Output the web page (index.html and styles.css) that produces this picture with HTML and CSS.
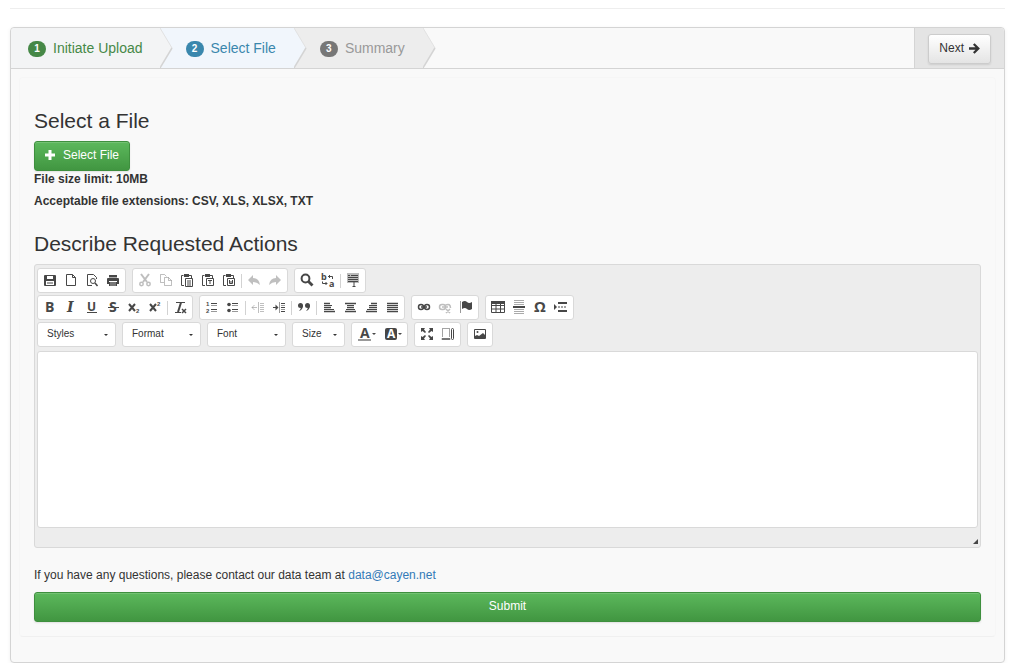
FILE: index.html
```html
<!DOCTYPE html>
<html lang="en">
<head>
<meta charset="utf-8">
<title>Upload</title>
<link rel="stylesheet" href="styles.css">
</head>
<body>
<hr class="rule">
<main class="wizard">
  <header class="wizard-head">
    <ol class="steps">
      <li class="step done"><span class="badge">1</span>Initiate Upload
        <svg class="chevron" viewBox="0 0 13 40"><path class="fill" d="M0 0L12 20 0 40z"/><path class="edge-top" d="M0 0L12 20"/><path class="edge" d="M12 20L0 40"/></svg></li>
      <li class="step active"><span class="badge">2</span>Select File
        <svg class="chevron" viewBox="0 0 13 40"><path class="fill" d="M0 0L12 20 0 40z"/><path class="edge-top" d="M0 0L12 20"/><path class="edge" d="M12 20L0 40"/></svg></li>
      <li class="step"><span class="badge">3</span>Summary
        <svg class="chevron" viewBox="0 0 13 40"><path class="fill" d="M0 0L12 20 0 40z"/><path class="edge-top" d="M0 0L12 20"/><path class="edge" d="M12 20L0 40"/></svg></li>
    </ol>
    <div class="actions">
      <button class="btn btn-default" type="button">Next
        <svg class="mark" viewBox="0 0 11 11"><path d="M0 5.5H9M4.8 1L9.3 5.5 4.8 10" fill="none" stroke="currentColor" stroke-width="2.3"/></svg></button>
    </div>
  </header>
  <form class="panel">
    <h2 class="title">Select a File</h2>
    <button class="btn btn-success" type="button"><svg class="mark plus" viewBox="0 0 11 11"><path d="M5 0v10M0 5h10" stroke="currentColor" stroke-width="3"/></svg>Select File</button>
    <p class="note strong">File size limit: 10MB</p>
    <p class="note strong spaced">Acceptable file extensions: CSV, XLS, XLSX, TXT</p>
    <h2 class="title second">Describe Requested Actions</h2>

    <div class="editor">
      <div class="toolbar">
        <div class="row">
          <div class="group">
            <button type="button" class="tool" aria-label="Save"><svg viewBox="0 0 14 14"><path d="M1 3q0-1 1-1h10q1 0 1 1v9q0 1-1 1H2q-1 0-1-1z" fill="#474747"/><path d="M4 3h6v3H4zM3 8h8v4H3z" fill="#fff"/><path d="M4 10h6" stroke="#474747"/></svg></button>
            <button type="button" class="tool" aria-label="New page"><svg viewBox="0 0 14 14"><path d="M2.500 1.500h6l3 3v8h-9zM8.500 1.500v3h3" class="ln"/></svg></button>
            <button type="button" class="tool" aria-label="Preview"><svg viewBox="0 0 14 14"><path d="M11.500 6V4.500l-3-3h-6v11H7" class="ln"/><circle cx="8" cy="8" r="2.500" class="ln"/><path d="M10 10l2.500 3" class="ln bold"/></svg></button>
            <button type="button" class="tool" aria-label="Print"><svg viewBox="0 0 14 14"><path d="M3 2h8v2H3zM1 6q0-1 1-1h10q1 0 1 1v5h-2V8H3v3H1zM3 9h8v4H3z" fill="#474747"/><path d="M4 10h6M4 12h6M3 4.500h8" stroke="#aaa"/></svg></button>
          </div>
          <div class="group">
            <button type="button" class="tool off" aria-label="Cut" disabled><svg viewBox="0 0 14 14"><path d="M3 1l6 8M11 1L5 9" class="ln wide"/><circle cx="3.500" cy="11" r="1.700" class="ln bold"/><circle cx="10.500" cy="11" r="1.700" class="ln bold"/></svg></button>
            <button type="button" class="tool off" aria-label="Copy" disabled><svg viewBox="0 0 14 14"><path d="M5 9.500H1.500v-8h4l2 2M5.500 4.500h4l3 3v5h-7zM9.500 4.500v3h3" class="ln"/></svg></button>
            <button type="button" class="tool" aria-label="Paste"><svg viewBox="0 0 14 14"><path d="M4 12.500H1.500v-10h2M9 2.500h2.500V5" class="ln"/><path d="M4 1h5v3H4z" fill="#474747"/><path d="M5.500 5.500h7v8h-7zM7 8h4M7 10h4M7 12h4" class="ln"/></svg></button>
            <button type="button" class="tool" aria-label="Paste as text"><svg viewBox="0 0 14 14"><path d="M4 12.500H1.500v-10h2M9 2.500h2.500V5" class="ln"/><path d="M4 1h5v3H4z" fill="#474747"/><path d="M5.500 5.500h7v7h-7zM7 7.500h4M9 7.500V11" class="ln"/></svg></button>
            <button type="button" class="tool" aria-label="Paste from Word"><svg viewBox="0 0 14 14"><path d="M4 12.500H1.500v-10h2M9 2.500h2.500V5" class="ln"/><path d="M4 1h5v3H4z" fill="#474747"/><path d="M5.500 5.500h7v7h-7zM7.500 7v3.500h3V7M9 8v3" class="ln"/></svg></button>
            <span class="sep"></span>
            <button type="button" class="tool off" aria-label="Undo" disabled><svg viewBox="0 0 14 14"><path d="M1 7l5-5v3q6 0 7 7Q10 9 6 9v3z" fill="#474747"/></svg></button>
            <button type="button" class="tool off" aria-label="Redo" disabled><svg viewBox="0 0 14 14"><path d="M13 7L8 2v3Q2 5 1 12 4 9 8 9v3z" fill="#474747"/></svg></button>
          </div>
          <div class="group">
            <button type="button" class="tool" aria-label="Find"><svg viewBox="0 0 14 14"><circle cx="5.500" cy="5.500" r="3.900" class="ln wide"/><path d="M8.500 8.500l4 4" stroke="#474747" stroke-width="2.800"/></svg></button>
            <button type="button" class="tool" aria-label="Replace"><svg viewBox="0 0 14 14"><text x="0" y="7" class="glyph mini">b</text><text x="8" y="14" class="glyph mini">a</text><path d="M7 3.500h4.500V6M9 2L7.500 3.500 9 5M1.500 8.500v2H6M4.500 9L6 10.500 4.500 12" class="ln"/></svg></button>
            <span class="sep"></span>
            <button type="button" class="tool" aria-label="Select all"><svg viewBox="0 0 14 14"><path d="M1 0h12v10H1z" fill="#bbb"/><path d="M2 2.500h2M5 2.500h7M2 4.500h10M2 6.500h10M2 8.500h10M8 9v4M6.500 13.500h3" class="ln"/></svg></button>
          </div>
        </div>
        <div class="row">
          <div class="group">
            <button type="button" class="tool" aria-label="Bold"><svg viewBox="0 0 14 14"><text x="2" y="12" class="glyph">B</text></svg></button>
            <button type="button" class="tool" aria-label="Italic"><svg viewBox="0 0 14 14"><text x="3" y="12" class="glyph serif">I</text></svg></button>
            <button type="button" class="tool" aria-label="Underline"><svg viewBox="0 0 14 14"><text x="2" y="11" class="glyph small">U</text><path d="M2 12.500h10" class="ln"/></svg></button>
            <button type="button" class="tool" aria-label="Strikethrough"><svg viewBox="0 0 14 14"><text x="3" y="12" class="glyph">S</text><path d="M2 7.500h11" class="ln"/></svg></button>
            <button type="button" class="tool" aria-label="Subscript"><svg viewBox="0 0 14 14"><path d="M2 4l6 7M8 4l-6 7" class="ln wide"/><text x="9" y="13" class="glyph tiny">2</text></svg></button>
            <button type="button" class="tool" aria-label="Superscript"><svg viewBox="0 0 14 14"><path d="M2 4l6 7M8 4l-6 7" class="ln wide"/><text x="9" y="6" class="glyph tiny">2</text></svg></button>
            <span class="sep"></span>
            <button type="button" class="tool" aria-label="Remove format"><svg viewBox="0 0 14 14"><path d="M3 2.500h9M2 12.500h6" class="ln"/><path d="M8 2.500L5 12" class="ln wide"/><path d="M9 9l4 4M13 9l-4 4" class="ln bold"/></svg></button>
          </div>
          <div class="group">
            <button type="button" class="tool" aria-label="Numbered list"><svg viewBox="0 0 14 14"><text x="1" y="6" class="glyph tiny">1</text><text x="1" y="13" class="glyph tiny">2</text><path d="M6 3.500h6M6 9.500h6" class="ln"/><path d="M6 5.500h6M6 11.500h6" stroke="#999"/></svg></button>
            <button type="button" class="tool" aria-label="Bulleted list"><svg viewBox="0 0 14 14"><circle cx="3" cy="4.500" r="1.800" fill="#474747"/><circle cx="3" cy="10.500" r="1.800" fill="#474747"/><path d="M6 3.500h6M6 9.500h6" class="ln"/><path d="M6 5.500h6M6 11.500h6" stroke="#999"/></svg></button>
            <span class="sep"></span>
            <button type="button" class="tool off" aria-label="Outdent" disabled><svg viewBox="0 0 14 14"><path d="M1 7.500h5M3.500 5L1 7.500 3.500 10M7.500 2v11M9 3.500h4M9 5.500h4M9 7.500h4M9 9.500h4M9 11.500h4" class="ln"/></svg></button>
            <button type="button" class="tool" aria-label="Indent"><svg viewBox="0 0 14 14"><path d="M1 7.500h5M9 3.500h4M9 7.500h4M9 11.500h4" class="ln"/><path d="M3.500 4.500l3 3-3 3z" fill="#474747"/><path d="M7.500 2v11M9 5.500h4M9 9.500h4" stroke="#999"/></svg></button>
            <span class="sep"></span>
            <button type="button" class="tool" aria-label="Quote"><svg viewBox="0 0 14 14"><g fill="#474747"><circle cx="3.500" cy="5.500" r="2.500"/><path d="M6 5q0 5-4 6 2-2 2-4z"/><circle cx="10.500" cy="5.500" r="2.500"/><path d="M13 5q0 5-4 6 2-2 2-4z"/></g></svg></button>
            <span class="sep"></span>
            <button type="button" class="tool" aria-label="Align left"><svg viewBox="0 0 14 14"><path d="M2 3.500h6M2 7.500h7M2 11.500h11" class="ln bold"/><path d="M2 5.500h8M2 9.500h10" class="ln"/></svg></button>
            <button type="button" class="tool" aria-label="Center"><svg viewBox="0 0 14 14"><path d="M2 3.500h11M4 7.500h7M2 11.500h11" class="ln bold"/><path d="M4 5.500h7M3 9.500h9" class="ln"/></svg></button>
            <button type="button" class="tool" aria-label="Align right"><svg viewBox="0 0 14 14"><path d="M7 3.500h6M5 7.500h8M2 11.500h11" class="ln bold"/><path d="M5 5.500h8M3 9.500h10" class="ln"/></svg></button>
            <button type="button" class="tool" aria-label="Justify"><svg viewBox="0 0 14 14"><path d="M2 3.500h11M2 7.500h11M2 11.500h11" class="ln bold"/><path d="M2 5.500h11M2 9.500h11" class="ln"/></svg></button>
          </div>
          <div class="group">
            <button type="button" class="tool" aria-label="Link"><svg viewBox="0 0 14 14"><rect x="1.500" y="4.500" width="5" height="5" rx="2.500" class="ln bold"/><rect x="7.500" y="4.500" width="5" height="5" rx="2.500" class="ln bold"/><path d="M4 7h6" class="ln bold"/></svg></button>
            <button type="button" class="tool off" aria-label="Unlink" disabled><svg viewBox="0 0 14 14"><rect x="1.500" y="4.500" width="6" height="5" rx="2.500" class="ln bold"/><path d="M4 7h6M7.500 5q5-2 5 3M8 9l4 4M12 9l-4 4" class="ln bold"/></svg></button>
            <button type="button" class="tool" aria-label="Anchor"><svg viewBox="0 0 14 14"><path d="M1.500 1v12" stroke="#999"/><path d="M3 2q3-2 5 0t5 0v7q-3 2-5 0t-5 0z" fill="#474747"/></svg></button>
          </div>
          <div class="group">
            <button type="button" class="tool" aria-label="Table"><svg viewBox="0 0 14 14"><path d="M.500 2.500h13v10H.500zM.500 5.500h13M.500 9h13M5 3v9.500M9.500 3v9.500" class="ln"/><path d="M0 1h14v3H0z" fill="#474747"/></svg></button>
            <button type="button" class="tool" aria-label="Horizontal line"><svg viewBox="0 0 14 14"><path d="M2 .500h10M2 2.500h10M2 4.500h10M2 9.500h10M2 11.500h10M2 13.500h10" stroke="#aaa"/><path d="M1 7h12" class="ln wide"/></svg></button>
            <button type="button" class="tool" aria-label="Special character"><svg viewBox="0 0 14 14"><text x="1" y="12" class="glyph omega">Ω</text></svg></button>
            <button type="button" class="tool" aria-label="Page break"><svg viewBox="0 0 14 14"><path d="M0 4l3 3-3 3z" fill="#474747"/><path d="M4 3h9M4 11h9" class="ln wide"/><path d="M4 7h9" class="ln" stroke-dasharray="2 1"/></svg></button>
          </div>
        </div>
        <div class="row">
          <label class="combo"><select aria-label="Styles"><option>Styles</option></select></label>
          <label class="combo"><select aria-label="Format"><option>Format</option></select></label>
          <label class="combo"><select aria-label="Font"><option>Font</option></select></label>
          <label class="combo narrow"><select aria-label="Size"><option>Size</option></select></label>
          <div class="group colors">
            <button type="button" class="tool" aria-label="Text color"><svg viewBox="0 0 14 14"><text x="2" y="11" class="glyph">A</text><path d="M0 13h13" stroke="#999" stroke-width="2"/></svg><span class="caret"></span></button>
            <button type="button" class="tool" aria-label="Background color"><svg viewBox="0 0 14 14"><rect x="1" y="1" width="12" height="12" rx="2" fill="#474747"/><text x="3" y="11" class="glyph small invert">A</text></svg><span class="caret"></span></button>
          </div>
          <div class="group">
            <button type="button" class="tool" aria-label="Maximize"><svg viewBox="0 0 14 14"><path d="M1 1h4L4 2.500 6 5 5 6 2.500 4 1 5zM13 1v4l-1.500-1L9 6 8 5l2-2.500L9 1zM1 13V9l1.500 1L5 8l1 1-2 2.500L5 13zM13 13H9l1-1.500L8 9l1-1 2.500 2L13 9z" fill="#474747"/></svg></button>
            <button type="button" class="tool" aria-label="Show blocks"><svg viewBox="0 0 14 14"><path d="M1.500 9.500v-8h7v8" class="ln" stroke-dasharray="1 1"/><path d="M1 11.500h8v1H1z" stroke="#777" fill="none"/><rect x="10.500" y="1.500" width="2" height="11" rx="1" class="ln"/></svg></button>
          </div>
          <div class="group">
            <button type="button" class="tool" aria-label="Image"><svg viewBox="0 0 14 14"><path d="M1.500 2.500h11v9h-11z" class="ln"/><circle cx="4.500" cy="5" r="1" fill="#474747"/><path d="M2 11V9l2-1 2 1 4-3 2 2v3z" fill="#474747"/></svg></button>
          </div>
        </div>
      </div>
      <textarea class="content" aria-label="Requested actions"></textarea>
      <div class="status"><svg class="grip" viewBox="0 0 5 5"><path d="M5 0v5H0z"/></svg></div>
    </div>

    <p class="note contact">If you have any questions, please contact our data team at <a href="mailto:data@cayen.net">data@cayen.net</a></p>
    <button class="btn btn-success submit" type="submit">Submit</button>
  </form>
</main>
</body>
</html>
```
FILE: styles.css
```css
* { box-sizing: border-box; }

body {
  margin: 0;
  padding: 8px 6px 0 10px;
  background: #fff;
  color: #333;
  font: 12px/16px "Liberation Sans", Arial, sans-serif;
}

button, select, textarea { font-family: inherit; }

.rule {
  height: 1px;
  margin: 0 0 18px;
  border: 0;
  background: #eee;
}

.wizard {
  border: 1px solid #d4d4d4;
  border-radius: 4px;
  background: #f9f9f9;
  box-shadow: 0 1px 4px rgba(0, 0, 0, .06);
  padding-bottom: 25px;
}

.wizard-head {
  display: flex;
  justify-content: space-between;
  height: 41px;
  border-bottom: 1px solid #d4d4d4;
}

.steps {
  display: flex;
  margin: 0;
  padding: 0;
  list-style: none;
}

.step {
  --tone: #ededed;
  position: relative;
  display: flex;
  align-items: center;
  gap: 7px;
  padding: 0 18px 0 26px;
  background: var(--tone);
  color: #999;
  font-size: 14px;
}

.step.done { --tone: #f3f4f5; color: #468847; padding: 0 17px; border-radius: 4px 0 0 0; }
.step.active { --tone: #f1f6fc; color: #3a87ad; }

.badge {
  width: 18px;
  margin-top: 1px;
  border-radius: 8px;
  background: #777;
  color: #fff;
  font: bold 10px/16px "Liberation Sans", Arial, sans-serif;
  text-align: center;
}

.done .badge { background: #468847; }
.active .badge { background: #3a87ad; }

.chevron {
  position: absolute;
  z-index: 1;
  top: 0;
  left: 100%;
  width: 13px;
  height: 40px;
}

.chevron .fill { fill: var(--tone); }
.chevron .edge, .chevron .edge-top { fill: none; stroke: #d4d4d4; }
.chevron .edge { stroke-width: 1.500; }
.chevron .edge-top { stroke: #e2e2e2; }

.actions {
  display: flex;
  align-items: center;
  padding: 2px 13px 0;
  border-left: 1px solid #d4d4d4;
  border-radius: 0 4px 0 0;
  background: #e4e4e4;
}

.btn {
  display: flex;
  align-items: center;
  justify-content: center;
  height: 30px;
  padding: 0 10px 2px;
  border: 1px solid #ccc;
  border-radius: 3px;
  font-size: 12px;
  line-height: 16px;
  box-shadow: inset 0 1px 0 rgba(255, 255, 255, .15), 0 1px 2px rgba(0, 0, 0, .1);
}

.btn-default {
  gap: 5px;
  background: linear-gradient(#fff, #e4e4e4);
  color: #333;
}

.btn-success {
  border-color: #3e8f3e;
  background: linear-gradient(#5cb85c, #419641);
  color: #fff;
}

.mark { width: 11px; height: 11px; }
.plus { margin-right: 7px; }
.submit { width: 100%; margin-top: 9px; }

.panel {
  margin: 8px 8px 0;
  padding: 31px 14px 14px;
  border: 1px solid #f6f6f6;
  border-bottom-color: #f0f0f0;
  border-radius: 4px;
}

.title {
  margin: 0 0 8px;
  font-size: 21px;
  font-weight: normal;
  line-height: 24px;
}

.title.second { margin-top: 23px; }
.note { margin: 0; }
.strong { font-weight: bold; }
.spaced { margin-top: 6px; }
.contact { margin-top: 19px; }
.contact a { color: #337ab7; text-decoration: none; }

.editor {
  padding: 3px 2px 0;
  border: 1px solid #d9d9d9;
  border-radius: 3px;
  background: #ededed;
}

.toolbar {
  display: flex;
  flex-direction: column;
  gap: 2px;
  margin-bottom: 4px;
}

.row { display: flex; flex-wrap: wrap; gap: 6px; }

.group, .combo {
  display: flex;
  align-items: center;
  height: 25px;
  border: 1px solid #d9d9d9;
  border-radius: 3px;
  background: #fff;
}

.group { padding: 0 1px 0 2px; }

.tool {
  display: flex;
  align-items: center;
  justify-content: center;
  width: 21px;
  height: 21px;
  padding: 0 1px 1px 0;
  border: 0;
  background: none;
}

.tool svg { width: 14px; height: 14px; flex: none; overflow: visible; }
.tool.off svg { opacity: .35; }
.colors .tool { width: 26px; }

.ln { fill: none; stroke: #474747; stroke-width: 1; }
.ln.bold { stroke-width: 1.500; }
.ln.wide { stroke-width: 2; }

.glyph { fill: #474747; font: bold 14px "Open Sans", sans-serif; }
.glyph.small { font-size: 12px; }
.glyph.mini { font-size: 9px; }
.glyph.tiny { font: bold 6px "Liberation Sans", sans-serif; }
.glyph.serif { font: italic bold 14px "DejaVu Serif", serif; }
.glyph.omega { font-size: 15px; }
.glyph.invert { fill: #fff; }

.sep {
  width: 1px;
  height: 14px;
  margin: 0 2px 0 1px;
  background: #d2d2d2;
}

.caret {
  width: 4px;
  border: 2px solid transparent;
  border-top-color: #474747;
  border-bottom: 0;
}

.combo { position: relative; width: 79px; }
.combo.narrow { width: 53px; }

.combo select {
  width: 100%;
  height: 23px;
  padding: 0 9px 2px;
  border: 0;
  border-radius: 3px;
  appearance: none;
  background: none;
  color: #333;
  font-size: 10px;
}

.combo::after {
  content: "";
  position: absolute;
  right: 7px;
  top: 11px;
  border: 2px solid transparent;
  border-top-color: #333;
  border-bottom: 0;
}

.content {
  display: block;
  width: 100%;
  height: 177px;
  border: 1px solid #d9d9d9;
  border-radius: 3px;
  background: #fff;
  resize: none;
}

.status {
  display: flex;
  align-items: flex-end;
  justify-content: flex-end;
  height: 19px;
  padding-bottom: 3px;
}

.grip { width: 5px; height: 5px; fill: #474747; }
```
